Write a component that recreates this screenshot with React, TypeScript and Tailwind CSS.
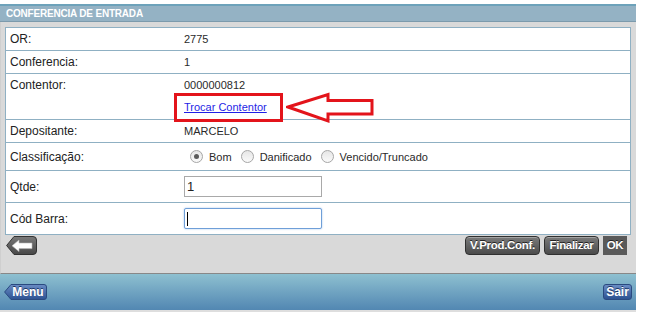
import React from "react";

const font = { fontFamily: '"Liberation Sans", Arial, sans-serif' };

function Radio({ checked }: { checked?: boolean }) {
  return (
    <span className="relative inline-flex h-[13px] w-[13px] items-center justify-center rounded-full border border-[#a6a6a6] bg-gradient-to-b from-[#e6e6e6] to-[#fafafa]">
      {checked && <span className="h-[5px] w-[5px] rounded-full bg-[#5a5a5a]" />}
    </span>
  );
}

function Row({ label, h, children, last, top }: { label: string; h: string; children?: React.ReactNode; last?: boolean; top?: boolean }) {
  return (
    <div className={`flex ${h} ${last ? "" : "border-b border-[#8fb0c3]"} ${top ? "items-start pt-[4px]" : "items-center"}`}>
      <div className="w-[178px] pl-[4px] text-[12px] leading-[14px] text-[#222]">{label}</div>
      <div className="flex-1 text-[11px] leading-[14px] text-[#2a2a2a]">{children}</div>
    </div>
  );
}

function GrayBtn({ children, w, flat }: { children: React.ReactNode; w: string; flat?: boolean }) {
  return (
    <div
      className={`flex h-[19px] ${w} items-center justify-center whitespace-nowrap text-[11.5px] font-bold tracking-[-0.3px] text-white [text-shadow:0_-1px_0_#222] ${
        flat
          ? "bg-[#5a5a5a]"
          : "rounded-[4px] border border-[#303030] bg-gradient-to-b from-[#7b7b7b] to-[#4b4b4b] shadow-[inset_0_1px_0_rgba(255,255,255,0.3)]"
      }`}
    >
      {children}
    </div>
  );
}

export default function App() {
  return (
    <div className="min-h-[323px] w-[648px] bg-white" style={font}>
      <div className="w-[636px] pt-[4px]">
        {/* header */}
        <div className="flex h-[18px] items-center border-t-2 border-b border-t-[#6da2ba] border-b-[#7c9aac] bg-[#94b2c4] px-[6px] text-[10px] font-bold tracking-[-0.2px] text-white">
          CONFERENCIA DE ENTRADA
        </div>
        {/* gray body */}
        <div className="border-b border-[#888] border-l border-l-[#cfcfcf] bg-[#d9d9d9] pb-[18px] pl-[4px] pr-[5px] pt-[5px]">
          <div className="relative border border-[#8fb0c3] bg-white">
            <Row label="OR:" h="h-[23px]">2775</Row>
            <Row label="Conferencia:" h="h-[23px]">1</Row>
            <Row label="Contentor:" h="h-[46px]" top>
              <div>0000000812</div>
              <div className="mt-[8px]">
                <a className="text-[#1f1fe6] underline underline-offset-[1px]" href="#">
                  Trocar Contentor
                </a>
              </div>
            </Row>
            <Row label="Depositante:" h="h-[23px]">MARCELO</Row>
            <Row label="Classificação:" h="h-[28px]">
              <div className="flex items-center pl-[6px]">
                <Radio checked />
                <span className="ml-[6px] mr-[9px]">Bom</span>
                <Radio />
                <span className="ml-[6px] mr-[9px]">Danificado</span>
                <Radio />
                <span className="ml-[6px]">Vencido/Truncado</span>
              </div>
            </Row>
            <Row label="Qtde:" h="h-[32px]">
              <div className="flex h-[21px] w-[138px] items-center border border-[#a9a9a9] bg-white pl-[2px] text-[13px] text-[#222]">1</div>
            </Row>
            <Row label="Cód Barra:" h="h-[31px]" last>
              <div className="flex h-[21px] w-[138px] items-center rounded-[2px] border border-[#6f9fd8] bg-white pl-[2px] shadow-[0_0_2px_#9cc0ea]">
                <span className="h-[14px] w-[1px] bg-black" />
              </div>
            </Row>

            {/* red highlight box */}
            <div className="pointer-events-none absolute left-[168px] top-[65px] h-[29px] w-[109px] border-[3px] border-[#e3141b]" />
            {/* red arrow */}
            <svg className="pointer-events-none absolute left-[280px] top-[64px]" width="90" height="32" viewBox="0 0 90 32">
              <polygon
                points="2,15 42,2.5 42,8.5 86,8.5 86,22 42,22 42,29"
                fill="white"
                stroke="#e3141b"
                strokeWidth="3"
                strokeLinejoin="miter"
              />
            </svg>
          </div>

          {/* buttons row */}
          <div className="mt-[1px] flex h-[19px] items-center justify-between pl-[1px] pr-[4px]">
            <svg width="31" height="19" viewBox="0 0 31 19">
              <defs>
                <linearGradient id="gb" x1="0" y1="0" x2="0" y2="1">
                  <stop offset="0" stopColor="#7a7a7a" />
                  <stop offset="1" stopColor="#474747" />
                </linearGradient>
              </defs>
              <path d="M0.6 9.5 L8 0.5 H27 Q30.5 0.5 30.5 4 V15 Q30.5 18.5 27 18.5 H8 Z" fill="url(#gb)" stroke="#333" />
              <polygon points="6,9.8 13,4 13,7 26,7 26,12.6 13,12.6 13,15.6" fill="#fff" stroke="#bbb" strokeWidth="0.6" />
            </svg>
            <div className="flex gap-[4px]">
              <GrayBtn w="w-[75px]">V.Prod.Conf.</GrayBtn>
              <GrayBtn w="w-[55px]">Finalizar</GrayBtn>
              <GrayBtn w="w-[24px]" flat>OK</GrayBtn>
            </div>
          </div>
        </div>
        {/* footer */}
        <div className="flex h-[36px] items-center justify-between bg-gradient-to-b from-[#8ec0d0] to-[#5287b2] pl-[4px] pr-[4px]">
          <div className="relative h-[16px] w-[43px]">
            <svg className="absolute inset-0" width="43" height="16" viewBox="0 0 43 16">
              <defs>
                <linearGradient id="gm" x1="0" y1="0" x2="0" y2="1">
                  <stop offset="0" stopColor="#6a8cc4" />
                  <stop offset="1" stopColor="#2d5292" />
                </linearGradient>
              </defs>
              <path d="M0.6 8 L7 0.5 H40 Q42.5 0.5 42.5 3 V13 Q42.5 15.5 40 15.5 H7 Z" fill="url(#gm)" stroke="#2a4a80" />
            </svg>
            <span className="absolute inset-0 flex items-center justify-center pl-[5px] text-[12px] font-bold text-white [text-shadow:0_-1px_0_#1d3766]">
              Menu
            </span>
          </div>
          <div className="flex h-[16px] w-[29px] items-center justify-center rounded-[3px] border border-[#2a4a80] bg-gradient-to-b from-[#6a8cc4] to-[#2d5292] text-[12px] font-bold text-white [text-shadow:0_-1px_0_#1d3766]">
            Sair
          </div>
        </div>
        <div className="h-[2px] bg-[#dedede]" />
      </div>
    </div>
  );
}
